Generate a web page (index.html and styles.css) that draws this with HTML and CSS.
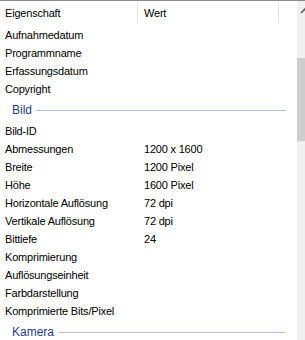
FILE: index.html
```html
<!DOCTYPE html>
<html lang="de">
<head>
  <meta charset="UTF-8" />
  <title>Details</title>
  <link rel="stylesheet" href="styles.css">
</head>
<body>
  <div class="window">
    <div class="list">
      <!-- Spaltenkopf -->
      <div class="header">
        <div class="col name">Eigenschaft</div>
        <div class="col value">Wert</div>
        <div class="col rest"></div>
      </div>

      <div class="row"><span class="name">Aufnahmedatum</span><span class="value"></span></div>
      <div class="row"><span class="name">Programmname</span><span class="value"></span></div>
      <div class="row"><span class="name">Erfassungsdatum</span><span class="value"></span></div>
      <div class="row"><span class="name">Copyright</span><span class="value"></span></div>

      <div class="group"><span class="group-title">Bild</span><span class="group-line"></span></div>
      <div class="row"><span class="name">Bild-ID</span><span class="value"></span></div>
      <div class="row"><span class="name">Abmessungen</span><span class="value">1200 x 1600</span></div>
      <div class="row"><span class="name">Breite</span><span class="value">1200 Pixel</span></div>
      <div class="row"><span class="name">Höhe</span><span class="value">1600 Pixel</span></div>
      <div class="row"><span class="name">Horizontale Auflösung</span><span class="value">72 dpi</span></div>
      <div class="row"><span class="name">Vertikale Auflösung</span><span class="value">72 dpi</span></div>
      <div class="row"><span class="name">Bittiefe</span><span class="value">24</span></div>
      <div class="row"><span class="name">Komprimierung</span><span class="value"></span></div>
      <div class="row"><span class="name">Auflösungseinheit</span><span class="value"></span></div>
      <div class="row"><span class="name">Farbdarstellung</span><span class="value"></span></div>
      <div class="row"><span class="name">Komprimierte Bits/Pixel</span><span class="value"></span></div>

      <div class="group"><span class="group-title">Kamera</span><span class="group-line"></span></div>
    </div>

    <!-- Bildlaufleiste (rechts abgeschnitten) -->
    <div class="scrollbar">
      <div class="arrow">
        <svg width="17" height="17" viewBox="0 0 17 17">
          <polyline points="4,12 8.5,7.5 13,12" fill="none" stroke="#606060" stroke-width="1.6"/>
        </svg>
      </div>
      <div class="track">
        <div class="thumb"></div>
      </div>
    </div>
  </div>
</body>
</html>
```

FILE: styles.css
```css
html, body {
  margin: 0;
  padding: 0;
  background-color: #fff;
  overflow: hidden;
}
body {
  font-family: 'Liberation Sans', Arial, sans-serif;
  font-size: 11px;
  letter-spacing: -0.2px;
  color: #000;
  width: 305px;
  height: 340px;
}
.window {
  display: flex;
  width: 314px;
  height: 340px;
  border-top: 1px solid #8a8a8a;
  box-sizing: border-box;
}
.list {
  width: 297px;
  flex: none;
  overflow: hidden;
}
.header {
  display: flex;
  height: 25px;
  align-items: stretch;
}
.header .col {
  display: flex;
  align-items: center;
  padding-top: 1px;
  box-sizing: border-box;
  border-right: 1px solid #e5e5e5;
  margin: 1px 0 3px;
}
.header .name {
  width: 138px;
  padding-left: 5px;
}
.header .value {
  width: 141px;
  padding-left: 6px;
}
.header .rest {
  border-right: none;
  flex: 1;
}
.row {
  display: flex;
  height: 18px;
  align-items: center;
}
.row .name {
  width: 139px;
  padding-left: 5px;
  box-sizing: border-box;
  white-space: nowrap;
}
.row .value {
  padding-left: 5px;
  white-space: nowrap;
}
.group {
  display: flex;
  align-items: center;
  height: 24px;
  padding: 0 11px 0 12px;
  gap: 4px;
}
.group-title {
  color: #1f3a93;
  font-size: 12px;
  letter-spacing: 0;
}
.group-line {
  flex: 1;
  height: 1px;
  background-color: #b7c3e3;
  margin-top: 1px;
}
.scrollbar {
  width: 17px;
  flex: none;
  background-color: #f0f0f0;
  display: flex;
  flex-direction: column;
}
.arrow {
  height: 17px;
}
.arrow svg {
  display: block;
}
.track {
  flex: 1;
  padding: 40px 0 0;
}
.thumb {
  height: 83px;
  background-color: #cdcdcd;
}
```
